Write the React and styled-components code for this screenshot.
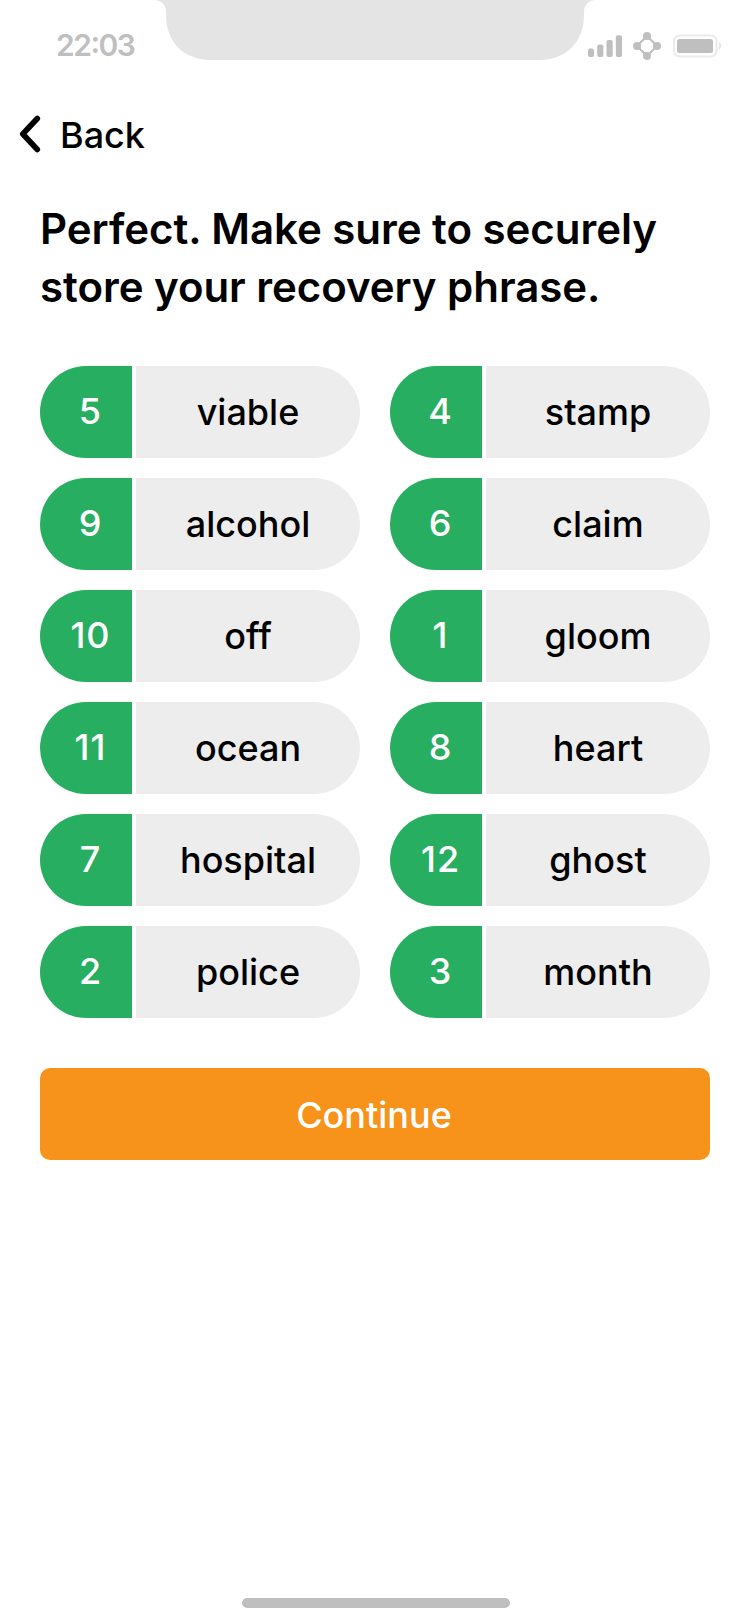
import React from 'react';
import styled, { createGlobalStyle } from 'styled-components';

const GlobalStyle = createGlobalStyle`
  *, *::before, *::after { box-sizing: border-box; }
  body { margin: 0; background: #fff; }
`;

const Screen = styled.div`
  width: 750px;
  height: 1624px;
  display: flex;
  flex-direction: column;
  overflow: hidden;
  background: #fff;
  color: #000;
  font-family: Inter, "Liberation Sans", sans-serif;
  font-weight: 500;
`;

const StatusBar = styled.header`
  height: 88px;
  flex: none;
  display: flex;
  align-items: flex-start;
`;

const Time = styled.span`
  width: 154px;
  padding: 26px 0 0 56px;
  color: #bfbfbf;
  font-size: 30px;
  font-weight: 600;
  line-height: 38px;
  letter-spacing: -1.5px;
  font-feature-settings: "calt" 1, "case" 1;
  white-space: nowrap;
`;

const Notch = styled.svg`
  width: 442px;
  height: 60px;
  display: block;
  fill: #e4e4e4;
`;

const StatusIcons = styled.svg`
  width: 166px;
  height: 88px;
  margin-left: -12px;
  display: block;
`;

const BackButton = styled.button`
  height: 94px;
  flex: none;
  align-self: flex-start;
  display: flex;
  align-items: center;
  gap: 18px;
  padding: 0 20px 0 18px;
  border: 0;
  background: none;
  color: inherit;
  font: inherit;
  font-size: 36px;
  line-height: 44px;
`;

const BackIcon = styled.svg`
  width: 24px;
  height: 38px;
  margin-top: -2px;
`;

const Main = styled.main`
  display: flex;
  flex-direction: column;
  padding: 18px 40px 0;
`;

const Title = styled.h1`
  margin: 0 0 50px;
  font-size: 42px;
  font-weight: 600;
  line-height: 58px;
  letter-spacing: -0.04px;
  white-space: nowrap;
`;

const PhraseGrid = styled.ol`
  margin: 0 0 50px;
  padding: 0;
  list-style: none;
  display: grid;
  grid-template-columns: 1fr 1fr;
  gap: 20px 30px;
`;

const PhraseItem = styled.li`
  height: 92px;
  display: flex;
  gap: 4px;
  border-radius: 46px;
  overflow: hidden;
  font-size: 36px;
  line-height: 44px;
`;

const Position = styled.span`
  width: 92px;
  display: flex;
  align-items: center;
  justify-content: center;
  padding: 0 0 2px 9px;
  background: #27ae60;
  color: #fff;
  letter-spacing: 1px;
  font-kerning: none;
`;

const Word = styled.span`
  flex: 1;
  display: flex;
  align-items: center;
  justify-content: center;
  background: #ededed;
`;

const ContinueButton = styled.button`
  height: 92px;
  padding: 2px 2px 0 0;
  border: 0;
  border-radius: 10px;
  background: #f7931a;
  color: #fff;
  font: inherit;
  font-size: 36px;
`;

const HomeIndicator = styled.div`
  width: 268px;
  height: 10px;
  margin: auto 0 16px 242px;
  border-radius: 5px;
  background: #bfbfbf;
`;

const phrase = [
  [5, 'viable'], [4, 'stamp'],
  [9, 'alcohol'], [6, 'claim'],
  [10, 'off'], [1, 'gloom'],
  [11, 'ocean'], [8, 'heart'],
  [7, 'hospital'], [12, 'ghost'],
  [2, 'police'], [3, 'month'],
];

export default function App() {
  return (
    <>
      <GlobalStyle />
      <Screen>
        <StatusBar>
          <Time>22:03</Time>
          <Notch viewBox="0 0 442 60">
            <path d="M2 0H440C433 1.500 430 6 430 12V15C430 42 412 60 385 60H57C30 60 12 42 12 15V12C12 6 9 1.500 2 0Z" />
          </Notch>
          <StatusIcons viewBox="584 0 166 88" fill="#bfbfbf">
            <rect x="588" y="48.500" width="6" height="8.500" rx="2" />
            <rect x="597.200" y="44.500" width="6.200" height="12.500" rx="2" />
            <rect x="606.500" y="40" width="6.200" height="17" rx="2" />
            <rect x="615.800" y="35.200" width="6.200" height="21.800" rx="2" />
            <path d="M647 36L657 46L647 56L637 46Z" fill="none" stroke="#bfbfbf" strokeWidth="2" />
            <circle cx="647" cy="46" r="7.500" fill="none" stroke="#bfbfbf" strokeWidth="1" />
            <circle cx="647" cy="36" r="4" />
            <circle cx="657" cy="46" r="4" />
            <circle cx="647" cy="56" r="4" />
            <circle cx="637" cy="46" r="4" />
            <rect x="674" y="35.500" width="42.500" height="21" rx="5.500" fill="none" stroke="#ebebeb" strokeWidth="2" />
            <rect x="677" y="39" width="36" height="14" rx="2.500" />
            <path d="M719 42C722 43.500 722 48 719 49.500Z" fill="#e5e5e5" />
          </StatusIcons>
        </StatusBar>
        <BackButton>
          <BackIcon viewBox="0 0 24 38" fill="none" stroke="#000" strokeWidth="5.6" strokeLinecap="round" strokeLinejoin="round">
            <path d="M19.300 3.500L4.800 19L19.300 34.500" />
          </BackIcon>
          Back
        </BackButton>
        <Main>
          <Title>Perfect. Make sure to securely<br />store your recovery phrase.</Title>
          <PhraseGrid>
            {phrase.map(([position, word]) => (
              <PhraseItem key={position}>
                <Position>{position}</Position>
                <Word>{word}</Word>
              </PhraseItem>
            ))}
          </PhraseGrid>
          <ContinueButton>Continue</ContinueButton>
        </Main>
        <HomeIndicator />
      </Screen>
    </>
  );
}
